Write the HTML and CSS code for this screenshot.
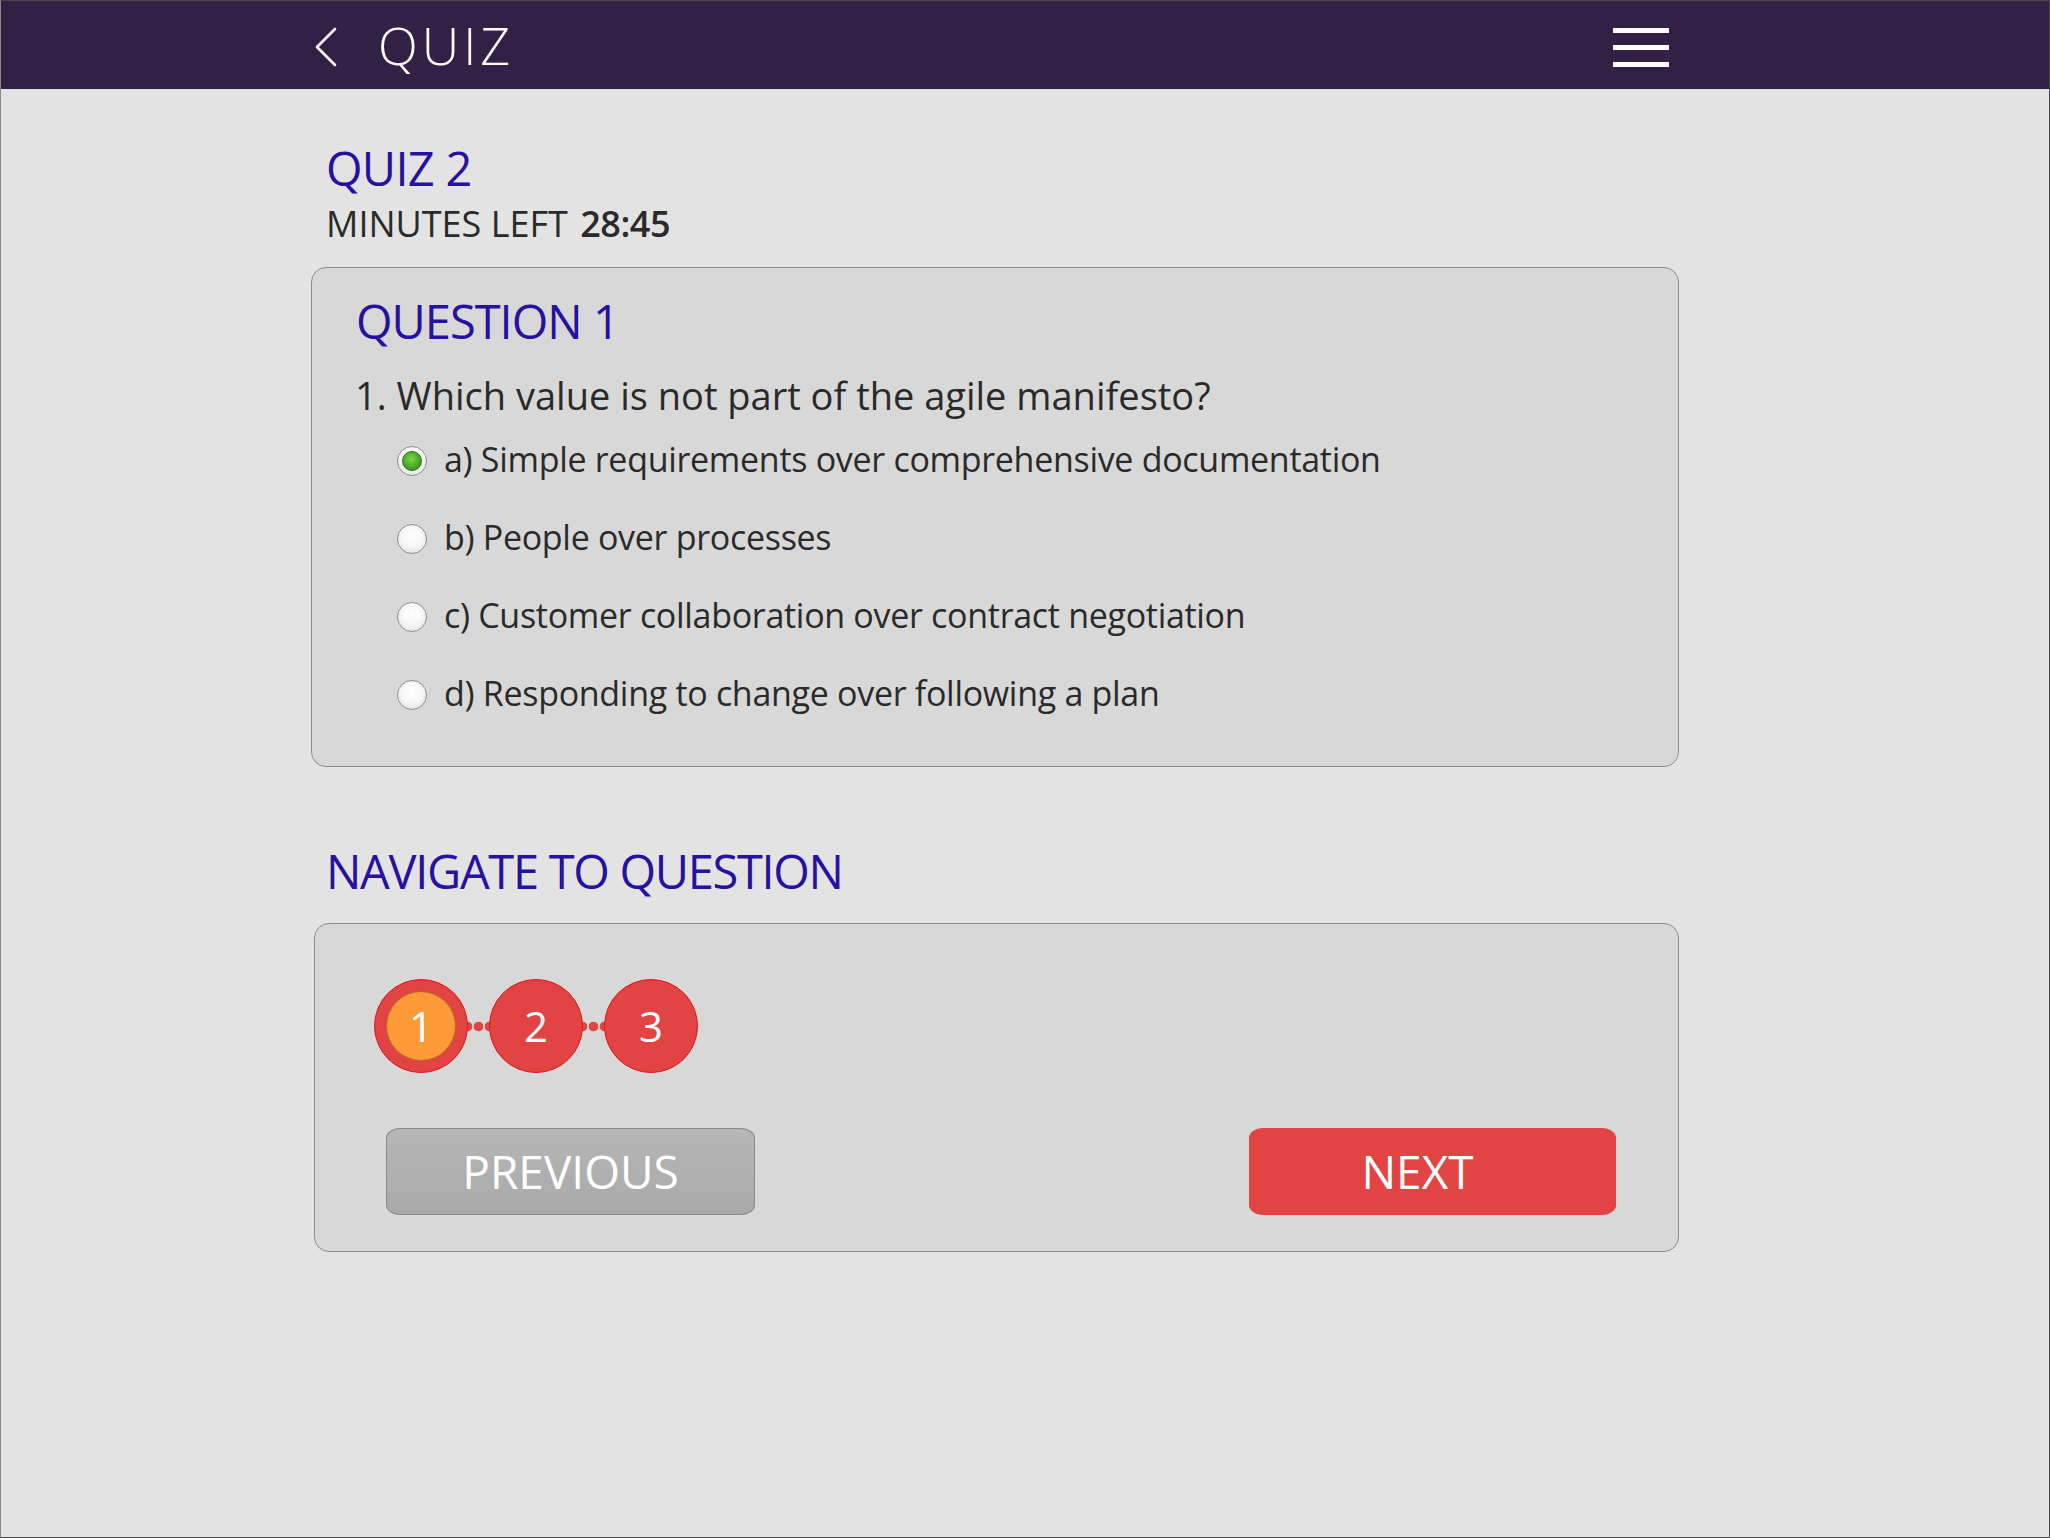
FILE: index.html
```html
<!DOCTYPE html>
<html lang="en">
<head>
<meta charset="utf-8">
<title>Quiz</title>
<link rel="stylesheet" href="styles.css">
</head>
<body>
<div class="frame">
  <header class="topbar">
    <div class="wrap bar-inner">
      <svg class="back" viewBox="0 0 24 40" aria-hidden="true"><polyline points="21,2 3,20 21,38" fill="none" stroke="#fff" stroke-width="2.6" stroke-linecap="round" stroke-linejoin="round"/></svg>
      <span class="bar-title">QUIZ</span>
      <svg class="menu" viewBox="0 0 56 40" aria-hidden="true"><rect x="0" y="1" width="56" height="5" fill="#fff"/><rect x="0" y="18" width="56" height="5" fill="#fff"/><rect x="0" y="35" width="56" height="5" fill="#fff"/></svg>
    </div>
  </header>
  <main class="wrap content">
    <h1 class="heading">QUIZ 2</h1>
    <p class="timer">MINUTES LEFT <strong>28:45</strong></p>
    <section class="card qcard">
      <h2 class="heading qhead">QUESTION 1</h2>
      <p class="qtext">1. Which value is not part of the agile manifesto?</p>
      <ul class="options">
        <li class="option"><span class="radio checked"></span><span>a) Simple requirements over comprehensive documentation</span></li>
        <li class="option"><span class="radio"></span><span>b) People over processes</span></li>
        <li class="option"><span class="radio"></span><span>c) Customer collaboration over contract negotiation</span></li>
        <li class="option"><span class="radio"></span><span>d) Responding to change over following a plan</span></li>
      </ul>
    </section>
    <h2 class="heading nav-heading">NAVIGATE TO QUESTION</h2>
    <section class="card navcard">
      <div class="steps">
        <span class="step current"><span class="step-inner">1</span></span>
        <span class="dots"></span>
        <span class="step">2</span>
        <span class="dots"></span>
        <span class="step">3</span>
      </div>
      <div class="buttons">
        <button class="btn btn-prev">PREVIOUS</button>
        <button class="btn btn-next">NEXT</button>
      </div>
    </section>
  </main>
</div>
</body>
</html>
```
FILE: styles.css
```css
html, body {
  margin: 0;
  padding: 0;
  background: #e3e3e3;
}

.frame {
  width: 2050px;
  height: 1538px;
  box-sizing: border-box;
  border: 1px solid #4a4a4a;
  border-left-color: #8a8a8a;
  background: #e3e3e3;
  font-family: "Open Sans", "Noto Sans", sans-serif;
  overflow: hidden;
}

.wrap {
  width: 1368px;
  margin-left: 310px;
  box-sizing: border-box;
}

.topbar {
  height: 88px;
  background: #332145;
}

.bar-inner {
  height: 88px;
  display: flex;
  align-items: center;
  padding: 0 10px 0 3px;
}

.back {
  width: 24px;
  height: 40px;
  margin-top: 3px;
  flex: none;
}

.bar-title {
  font-size: 52px;
  font-weight: 300;
  color: #fff;
  line-height: 88px;
  letter-spacing: 4px;
  margin-left: 40px;
}

.menu {
  width: 56px;
  height: 40px;
  margin-left: auto;
  margin-top: 4px;
  flex: none;
}

.content {
  padding-top: 51px;
}

.heading {
  font-size: 47px;
  font-weight: 400;
  color: #2810a0;
  line-height: 56px;
  letter-spacing: -0.7px;
  margin: 0;
  padding-left: 15px;
}

.timer {
  font-size: 36px;
  line-height: 56px;
  margin: 0 0 15px;
  padding-left: 15px;
  color: #2a2a2a;
}

.timer strong {
  font-weight: 600;
  margin-left: 3px;
  letter-spacing: -0.5px;
}

.card {
  background: #d8d8d8;
  border: 1px solid #8e8e8e;
  border-radius: 15px;
}

.qcard {
  padding: 25px 0 34px 43px;
}

.qhead {
  padding-left: 1px;
  letter-spacing: -1px;
}

.qtext {
  font-size: 38px;
  line-height: 44px;
  margin: 24px 0 3px;
  color: #2a2a2a;
}

.options {
  list-style: none;
  margin: 0;
  padding: 0 0 0 42px;
}

.option {
  height: 78px;
  display: flex;
  align-items: center;
  font-size: 34px;
  letter-spacing: -0.3px;
  line-height: 78px;
  color: #2a2a2a;
}

.radio {
  flex: none;
  width: 30px;
  height: 30px;
  box-sizing: border-box;
  margin: 4px 17px 0 0;
  border-radius: 50%;
  border: 1px solid #8f8f8f;
  background: radial-gradient(circle at 50% 40%, #ffffff 0%, #f7f7f7 45%, #dcdcdc 100%);
  display: flex;
  align-items: center;
  justify-content: center;
}

.radio.checked::after {
  content: "";
  width: 20px;
  height: 20px;
  box-sizing: border-box;
  border-radius: 50%;
  border: 1px solid #2f6e1a;
  background: radial-gradient(circle at 45% 40%, #7fd64a 0%, #48a82a 55%, #2f8118 100%);
}

.nav-heading {
  margin: 76px 0 24px;
  padding-left: 15px;
  letter-spacing: -1.3px;
}

.navcard {
  margin-left: 3px;
  width: 1365px;
  box-sizing: border-box;
  padding: 55px 62px 36px 59px;
}

.steps {
  display: flex;
  align-items: center;
  height: 94px;
}

.step {
  width: 94px;
  height: 94px;
  box-sizing: border-box;
  border-radius: 50%;
  background: #e24343;
  border: 1px solid #e3151b;
  display: flex;
  align-items: center;
  justify-content: center;
  color: #fff;
  font-size: 42px;
  line-height: 1;
  z-index: 1;
  flex: none;
}

.step-inner {
  width: 70px;
  height: 70px;
  box-sizing: border-box;
  border-radius: 50%;
  background: #fb9a37;
  border: 1px solid #b86a22;
  display: flex;
  align-items: center;
  justify-content: center;
}

.dots {
  flex: none;
  width: 33px;
  height: 11px;
  margin: 0 -6px;
  background: radial-gradient(circle, #e24343 4.4px, rgba(226, 67, 67, 0) 5.2px) 0 0 / 11px 11px repeat-x;
}

.buttons {
  display: flex;
  justify-content: space-between;
  margin-top: 55px;
  padding-left: 12px;
}

.btn {
  height: 87px;
  width: 369px;
  box-sizing: border-box;
  font-family: "Open Sans", "Noto Sans", sans-serif;
  font-size: 46px;
  font-weight: 400;
  color: #fff;
  line-height: 85px;
  padding: 0;
  border-radius: 14px / 10px;
  cursor: pointer;
}

.btn-prev {
  background: linear-gradient(#b6b6b6, #a9a9a9);
  border: 1px solid #8a8a8a;
}

.btn-next {
  width: 367px;
  background: #e24444;
  border: 1px solid #e24444;
  padding-right: 30px;
}
```
